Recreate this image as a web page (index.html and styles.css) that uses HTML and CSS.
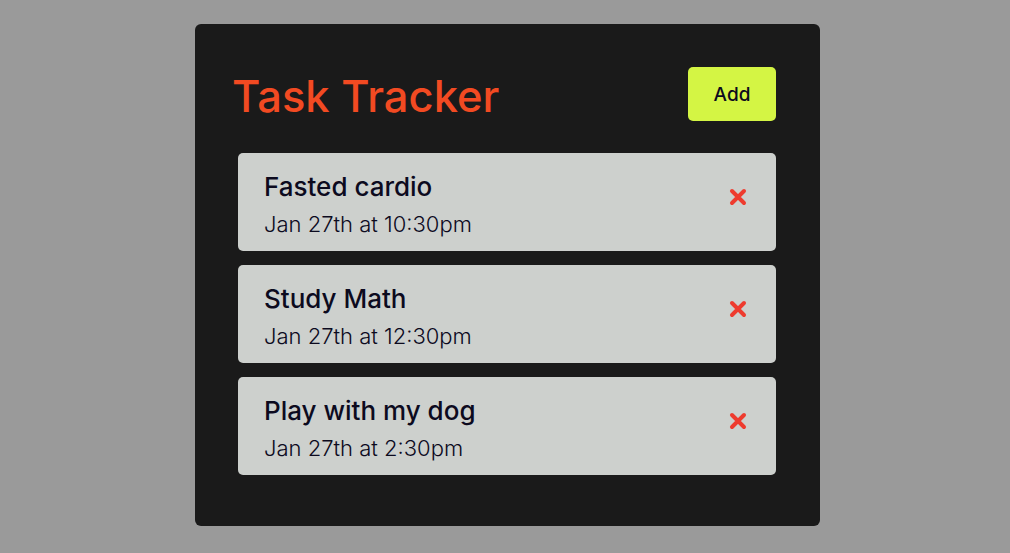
FILE: index.html
```html
<!DOCTYPE html>
<html lang="en">
<head>
<meta charset="utf-8">
<title>Task Tracker</title>
<link rel="stylesheet" href="styles.css">
</head>
<body>
<div class="container">
  <header class="header">
    <h1 class="title">Task Tracker</h1>
    <button class="btn">Add</button>
  </header>
  <div class="tasks">
    <div class="task">
      <div class="task-text">
        <h3 class="task-title">Fasted cardio</h3>
        <p class="task-day">Jan 27th at 10:30pm</p>
      </div>
      <svg class="del" width="18" height="18" viewBox="0 0 18 18"><path d="M3 3 L15 15 M15 3 L3 15" stroke="#ee3b2e" stroke-width="4" stroke-linecap="round" fill="none"/></svg>
    </div>
    <div class="task">
      <div class="task-text">
        <h3 class="task-title">Study Math</h3>
        <p class="task-day">Jan 27th at 12:30pm</p>
      </div>
      <svg class="del" width="18" height="18" viewBox="0 0 18 18"><path d="M3 3 L15 15 M15 3 L3 15" stroke="#ee3b2e" stroke-width="4" stroke-linecap="round" fill="none"/></svg>
    </div>
    <div class="task">
      <div class="task-text">
        <h3 class="task-title">Play with my dog</h3>
        <p class="task-day">Jan 27th at 2:30pm</p>
      </div>
      <svg class="del" width="18" height="18" viewBox="0 0 18 18"><path d="M3 3 L15 15 M15 3 L3 15" stroke="#ee3b2e" stroke-width="4" stroke-linecap="round" fill="none"/></svg>
    </div>
  </div>
</div>
</body>
</html>
```

FILE: styles.css
```css
* { box-sizing: border-box; }
html, body { margin: 0; height: 100%; }
body {
  background: #9a9a9a;
  font-family: "Inter", "Open Sans", sans-serif;
  padding: 24px 0 0 5px;
  display: flex;
  justify-content: center;
  align-items: flex-start;
}
.container {
  width: 625px;
  background: #1a1a1a;
  border-radius: 6px;
  padding: 43px 44px 51px 37px;
}
.header {
  display: flex;
  justify-content: space-between;
  align-items: center;
  height: 54px;
}
.title {
  margin: 3px 0 0;
  color: #f24a22;
  font-size: 43.5px;
  font-weight: 500;
  letter-spacing: 0;
}
.btn {
  width: 88px;
  height: 54px;
  border: none;
  border-radius: 5px;
  background: #d4f544;
  color: #0c0a1e;
  font-family: inherit;
  font-size: 19px;
  font-weight: 500;
}
.tasks {
  margin: 32px 0 0 6px;
  display: flex;
  flex-direction: column;
  gap: 14px;
}
.task {
  height: 98px;
  background: #cdd0cd;
  border-radius: 5px;
  padding: 4px 29px 0 26px;
  display: flex;
  justify-content: space-between;
  align-items: center;
}
.task-title {
  margin: 0;
  font-size: 26px;
  font-weight: 500;
  color: #0c0a1e;
  line-height: 34px;
}
.task-day {
  margin: 5px 0 0;
  font-size: 22px;
  font-weight: 300;
  color: #0c0a1e;
  line-height: 30px;
}
.del { margin-top: -14px; }
```
